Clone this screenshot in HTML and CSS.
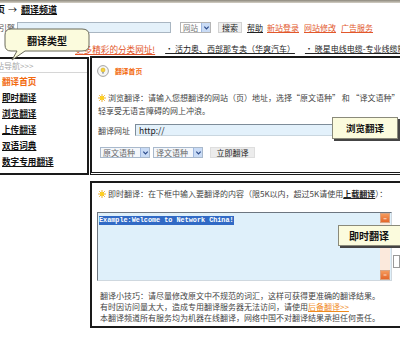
FILE: index.html
```html
<!DOCTYPE html>
<html lang="zh-CN">
<head>
<meta charset="utf-8">
<title>翻译频道</title>
<link rel="stylesheet" href="styles.css">
</head>
<body>
<div class="page">
  <div class="topline"></div>
  <div class="crumb">首页<span class="arrow">→</span><a class="crumb-link">翻译频道</a></div>
  <div class="search">
    <span class="lbl">引擎</span>
    <span class="sinput"></span>
    <span class="sselect"><span class="stext">网站</span><span class="dd"><svg viewBox="0 0 8 8" width="7" height="7"><path d="M1.5 3 L4 5.5 L6.5 3" fill="none" stroke="#2b4a8a" stroke-width="1.4"/></svg></span></span>
    <span class="sbtn">搜索</span>
    <a class="help">帮助</a>
    <a class="red l1">新站登录</a>
    <a class="red l2">网站修改</a>
    <a class="red l2">广告服务</a>
  </div>
  <div class="marquee">
    <a class="red m1">更多精彩的分类网址!</a>
    <a class="m2">· 活力奥、西部那专卖（华爽汽车）</a>
    <a class="m3">· 晓星电线电缆-专业线缆制造商</a>
  </div>
  <div class="main">
    <aside class="side">
      <div class="nav-head">站导航&gt;&gt;&gt;</div>
      <a class="item cur">翻译首页</a>
      <a class="item">即时翻译</a>
      <a class="item">浏览翻译</a>
      <a class="item">上传翻译</a>
      <a class="item">双语词典</a>
      <a class="item">数字专用翻译</a>
    </aside>
    <div class="content">
      <section class="panel p1">
        <div class="phead">
          <svg class="bulb" viewBox="0 0 12 12" width="12" height="12"><circle cx="6" cy="6" r="5.4" fill="#f6f6f4" stroke="#9a9a9a" stroke-width="0.9"/><circle cx="6" cy="5" r="2" fill="#f7d23a" stroke="#c9a21a" stroke-width="0.5"/><rect x="5.1" y="7" width="1.8" height="1.6" fill="#9aa3ad"/></svg>
          <span class="ptitle">翻译首页</span>
        </div>
        <p class="desc"><svg class="sun" viewBox="0 0 8 8" width="8" height="8"><g stroke="#e8a000" stroke-width="0.8"><line x1="4" y1="0" x2="4" y2="8"/><line x1="0" y1="4" x2="8" y2="4"/><line x1="1.2" y1="1.2" x2="6.8" y2="6.8"/><line x1="6.8" y1="1.2" x2="1.2" y2="6.8"/></g><circle cx="4" cy="4" r="2" fill="#ffd21a"/></svg>浏览翻译：请输入您想翻译的网站（页）地址，选择“原文语种” 和 “译文语种”<br>轻享受无语言障碍的网上冲浪。</p>
        <div class="urlrow">
          <span class="ulabel">翻译网址</span>
          <span class="uinput">http://</span>
        </div>
        <div class="selrow">
          <span class="lsel"><span class="stext">原文语种</span><span class="dd"><svg viewBox="0 0 8 8" width="7" height="7"><path d="M1.5 3 L4 5.5 L6.5 3" fill="none" stroke="#2b4a8a" stroke-width="1.4"/></svg></span></span>
          <span class="lsel l2"><span class="stext">译文语种</span><span class="dd"><svg viewBox="0 0 8 8" width="7" height="7"><path d="M1.5 3 L4 5.5 L6.5 3" fill="none" stroke="#2b4a8a" stroke-width="1.4"/></svg></span></span>
          <span class="gobtn">立即翻译</span>
        </div>
      </section>
      <section class="panel p2">
        <p class="p2head"><svg class="sun" viewBox="0 0 8 8" width="8" height="8"><g stroke="#e8a000" stroke-width="0.8"><line x1="4" y1="0" x2="4" y2="8"/><line x1="0" y1="4" x2="8" y2="4"/><line x1="1.2" y1="1.2" x2="6.8" y2="6.8"/><line x1="6.8" y1="1.2" x2="1.2" y2="6.8"/></g><circle cx="4" cy="4" r="2" fill="#ffd21a"/></svg>即时翻译：在下框中输入要翻译的内容（限5K以内，超过5K请使用<a class="upl">上载翻译</a>）：</p>
        <div class="tarow">
          <div class="ta">
            <div class="tatext"><span class="sel">Example:Welcome to Network China!</span></div>
            <div class="sbar">
              <span class="arr"><svg viewBox="0 0 8 8" width="6" height="6"><path d="M2 5 H6" stroke="#fff" stroke-width="1"/></svg></span>
              <span class="track"></span>
              <span class="arr"><svg viewBox="0 0 8 8" width="6" height="6"><path d="M2 4 H6" stroke="#fff" stroke-width="1"/></svg></span>
            </div>
          </div>
          <span class="sidebox"></span>
        </div>
        <p class="tips">翻译小技巧：请尽量修改原文中不规范的词汇，这样可获得更准确的翻译结果。<br>有时因访问量太大，造成专用翻译服务器无法访问，请使用<a class="bak">后备翻译&gt;&gt;</a><br>本翻译频道所有服务均为机器在线翻译，网络中国不对翻译结果承担任何责任。</p>
      </section>
    </div>
  </div>

  <div class="callout c1">
    <svg class="cshape" viewBox="0 0 86 34" width="86" height="34"><path d="M7 1 H78 Q85 1 85 7 V17 Q85 23 78 23 H21 L8 32 L13 23 H7 Q1 23 1 17 V7 Q1 1 7 1 Z" fill="#fbfbdd" stroke="#6a6a5a" stroke-width="1"/></svg>
    <span class="ctext">翻译类型</span>
  </div>
  <div class="callout c2"><span>浏览翻译</span></div>
  <div class="callout c3"><span>即时翻译</span></div>
</div>
</body>
</html>
```

FILE: styles.css
```css
* { box-sizing: border-box; margin: 0; padding: 0; }
html, body { width: 400px; height: 343px; overflow: hidden; background: #fff; }
body { font-family: "Noto Sans CJK SC", "Noto Sans", sans-serif; color: #333; font-size: 8px; }
a { color: inherit; }

.page { position: relative; width: 400px; height: 343px; overflow: hidden; }

.topline { height: 3px; background: linear-gradient(#8d887c, #d4d0c6); }

.crumb { height: 13px; line-height: 13px; font-size: 9px; font-weight: bold; color: #111; white-space: nowrap; text-indent: -13px; }
.crumb .arrow { font-weight: normal; margin: 0 4px 0 3px; }
.crumb-link { text-decoration: underline; }

.search { display: flex; align-items: center; height: 15px; margin-top: 4px; margin-left: -1px; white-space: nowrap; line-height: 11px; }
.search .lbl { width: 16px; color: #555; overflow: hidden; }
.sinput { width: 154px; height: 11px; margin-left: 2px; background: #e4f1fa; border: 1px solid #a9b6c2; }
.sselect { display: flex; align-items: stretch; width: 31px; height: 11px; margin-left: 9px; background: #fff; border: 1px solid #b5b5b5; color: #777; }
.sselect .stext { flex: 1; padding-left: 2px; line-height: 9px; font-size: 7.5px; }
.dd { display: flex; align-items: center; justify-content: center; width: 9px; background: #c9dbf5; border-left: 1px solid #9fb8e0; }
.sbtn { width: 24px; height: 11px; margin-left: 7px; background: #efefef; border: 1px solid #d2d2d2; text-align: center; line-height: 9px; color: #222; }
.help { margin-left: 5px; color: #222; text-decoration: underline; }
.red { color: #e2572b; text-decoration: underline; }
.l1 { margin-left: 4px; }
.l2 { margin-left: 5px; }

.marquee { display: flex; align-items: center; height: 15px; margin-top: 6px; white-space: nowrap; line-height: 12px; color: #222; }
.marquee a { text-decoration: underline; }
.m1 { margin-left: 75px; font-size: 8.6px; }
.m2 { margin-left: 10px; }
.m3 { margin-left: 10px; }

.main { display: flex; align-items: flex-start; }

.side { width: 89px; height: 118px; margin-top: 1px; border-top: 2px solid #1a1a1a; border-right: 2px solid #1a1a1a; border-bottom: 2px solid #1a1a1a; display: flex; flex-direction: column; }
.nav-head { height: 14px; line-height: 13px; color: #a8a8a8; text-indent: -4px; border-bottom: 1px solid #d6d6d6; white-space: nowrap; overflow: hidden; }
.item { height: 16px; line-height: 16px; padding-left: 2px; font-size: 8.6px; font-weight: bold; color: #111; text-decoration: underline; white-space: nowrap; }
.item.cur { color: #f26a10; text-decoration: none; }

.content { flex: 1; margin-left: 1px; display: flex; flex-direction: column; min-width: 0; }
.panel { border-left: 2px solid #1a1a1a; white-space: nowrap; overflow: hidden; }

.p1 { height: 119px; border-top: 2px solid #1a1a1a; border-bottom: 3px double #1a1a1a; }
.phead { display: flex; align-items: center; height: 13px; margin-top: 6px; padding-left: 5px; }
.bulb { flex: none; }
.ptitle { margin-left: 6px; font-size: 6.8px; font-weight: bold; color: #f26a10; }
.desc { margin-top: 14px; padding-left: 6px; line-height: 13px; color: #444; }
.sun { vertical-align: -1px; margin-right: 2px; }
.urlrow { display: flex; align-items: center; height: 14px; margin-top: 6px; }
.ulabel { width: 36px; padding-left: 6px; color: #444; }
.uinput { flex: 1; height: 12px; margin-left: 7px; padding-left: 3px; line-height: 10px; font-size: 8.5px; color: #222; background: #e3f1fb; border-top: 1px solid #7d8c99; border-left: 1px solid #7d8c99; border-bottom: 1px solid #c9d6df; }
.selrow { display: flex; align-items: center; height: 11px; margin-top: 10px; }
.lsel { display: flex; align-items: stretch; width: 50px; height: 11px; margin-left: 8px; background: #f4f7fb; border: 1px solid #a9b9cc; color: #666; }
.lsel.l2 { margin-left: 3px; }
.lsel .stext { flex: 1; padding-left: 2px; line-height: 9px; }
.gobtn { width: 45px; height: 11px; margin-left: 7px; background: #ececec; border: 1px solid #dedede; text-align: center; line-height: 9px; color: #222; }

.p2 { height: 147px; margin-top: 6px; border-top: 2px solid #1a1a1a; border-bottom: 2px solid #1a1a1a; }
.p2head { margin-top: 5px; padding-left: 6px; line-height: 12px; color: #444; }
.upl { font-weight: bold; color: #222; text-decoration: underline; }
.tarow { display: flex; align-items: flex-start; margin-top: 12px; padding-left: 5px; }
.ta { display: flex; width: 296px; height: 69px; background: #dff0fa; border-top: 1px solid #6d7680; border-left: 1px solid #6d7680; border-right: 1px solid #cfd8df; border-bottom: 1px solid #cfd8df; }
.tatext { flex: 1; padding: 0 0 0 1px; }
.sel { display: inline-block; font-family: "Liberation Mono", monospace; font-size: 6.8px; font-weight: bold; line-height: 9px; background: #316ac5; color: #fff; }
.sbar { display: flex; flex-direction: column; width: 10px; margin-right: 1px; }
.arr { display: flex; align-items: center; justify-content: center; height: 10px; background: linear-gradient(#f59a5c, #e4672a); border: 1px solid #d9a483; }
.track { flex: 1; background: #fbe9dc; }
.sidebox { width: 7px; height: 13px; margin-top: 43px; margin-left: 1px; background: #fff; border: 1px solid #9a9a9a; }
.tips { margin-top: 9px; padding-left: 8px; line-height: 11px; color: #444; }
.bak { color: #f08a1c; text-decoration: underline; }

.callout { position: absolute; font-weight: bold; color: #111; white-space: nowrap; }
.c1 { left: 4px; top: 28px; width: 86px; height: 34px; }
.cshape { position: absolute; left: 0; top: 0; }
.ctext { position: absolute; left: 0; width: 86px; top: 7px; text-align: center; font-size: 10px; line-height: 12px; }
.c2, .c3 { display: flex; align-items: center; justify-content: center; background: #fbfbdd; border: 1px solid #8a8a7a; box-shadow: 2px 2px 0 #444; }
.c2 { left: 332px; top: 117px; width: 66px; height: 22px; font-size: 9.5px; }
.c3 { left: 338px; top: 225px; width: 66px; height: 21px; font-size: 10px; padding-right: 4px; }
```
